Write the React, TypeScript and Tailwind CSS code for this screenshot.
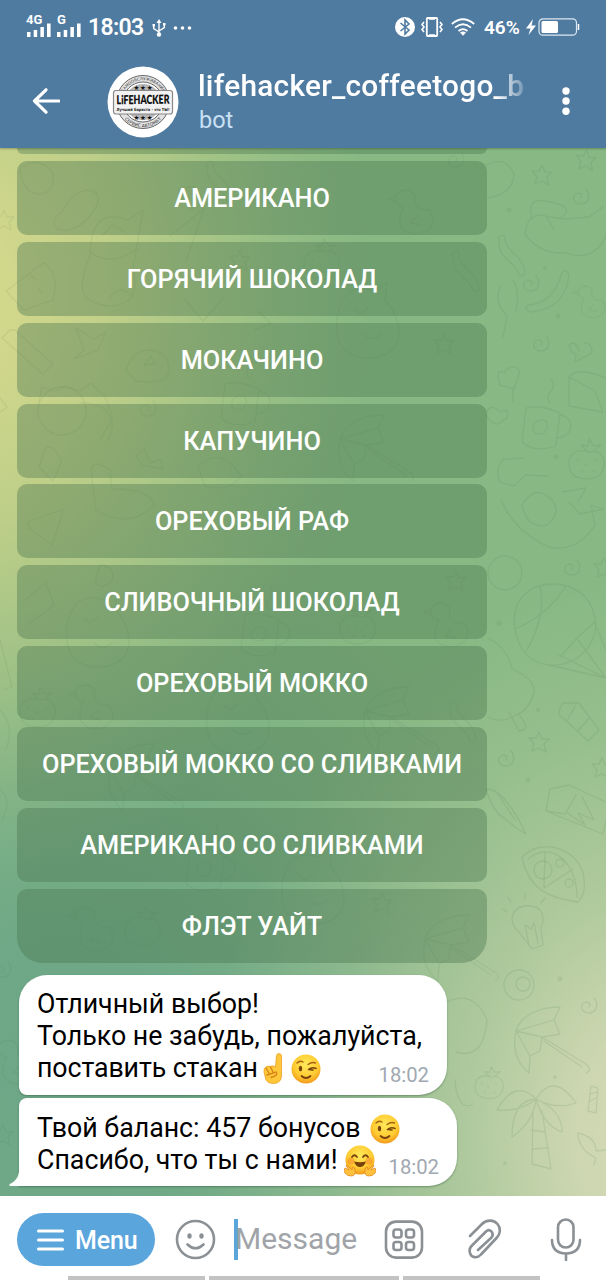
import React from "react";

const drinks = [
  "АМЕРИКАНО",
  "ГОРЯЧИЙ ШОКОЛАД",
  "МОКАЧИНО",
  "КАПУЧИНО",
  "ОРЕХОВЫЙ РАФ",
  "СЛИВОЧНЫЙ ШОКОЛАД",
  "ОРЕХОВЫЙ МОККО",
  "ОРЕХОВЫЙ МОККО СО СЛИВКАМИ",
  "АМЕРИКАНО СО СЛИВКАМИ",
  "ФЛЭТ УАЙТ",
];

function Signal() {
  return (
    <svg width="24" height="14" viewBox="0 0 24 14" className="block" fill="#fff">
      <rect x="0" y="9" width="3.5" height="5" />
      <rect x="6.7" y="7" width="3.5" height="7" />
      <rect x="13.4" y="4" width="3.5" height="10" />
      <rect x="20" y="0.5" width="3.6" height="13.5" />
    </svg>
  );
}

function StatusBar() {
  return (
    <div className="flex h-14 items-center pl-[27px] pr-[26px] text-white">
      <div className="relative mb-[5px] h-[22px] w-[24px] pt-[8px]">
        <span className="absolute -top-[1px] -left-[1px] text-[13px] font-bold leading-[12px]">4G</span>
        <Signal />
      </div>
      <div className="relative mb-[5px] ml-[6px] h-[22px] w-[24px] pt-[8px]">
        <span className="absolute -top-[1px] left-0 text-[13px] font-bold leading-[12px]">G</span>
        <Signal />
      </div>
      <span className="ml-[7px] w-[58px] whitespace-nowrap text-[23px] font-semibold leading-7 tracking-[-0.7px]">18:03</span>
      <svg className="ml-[6px]" width="14" height="18" viewBox="0 0 14 18" fill="none" stroke="#fff" strokeWidth="1.4">
        <path d="M7 3V15M1.7 6.5V9.5L7 13M12.3 5.5V8.5L7 12" />
        <path d="M7 0L9.5 4H4.500ZM0.500 5H3V7.500H0.500ZM11 4H13.500V6.500H11Z" fill="#fff" stroke="none" />
        <circle cx="7" cy="15.500" r="2.200" fill="#fff" stroke="none" />
      </svg>
      <svg className="ml-[7px]" width="20" height="6" fill="#fff">
        <circle cx="2.500" cy="3" r="1.800" /><circle cx="9.500" cy="3" r="1.800" /><circle cx="16.500" cy="3" r="1.800" />
      </svg>
      <div className="flex-1" />
      <svg className="mb-[2px]" width="20" height="20" viewBox="0 0 20 20">
        <circle cx="10" cy="10" r="10" fill="#fff" />
        <path d="M5.500 6L14 13L10 17V3L14 7L5.500 14" fill="none" stroke="#507ba1" strokeWidth="1.600" />
      </svg>
      <svg className="mb-[2px] ml-[6px]" width="22" height="20" viewBox="0 0 22 20" fill="none" stroke="#fff" strokeWidth="1.800">
        <rect x="5.800" y="1" width="10.400" height="18" rx="1" />
        <path d="M8 1.500H14M8 18.500H14" strokeWidth="2.500" />
        <path d="M3 5L1 7.500L3 10L1 12.500L3 15M19 5L21 7.500L19 10L21 12.500L19 15" strokeWidth="1.600" />
      </svg>
      <svg className="mb-[2px] ml-[8px]" width="24" height="18" viewBox="0 0 24 18" fill="none" stroke="#fff" strokeWidth="1.700">
        <path d="M0.800 6Q12 -3.500 23.200 6M4 9.700Q12 2.800 20 9.700M7.500 13Q12 9.200 16.500 13" />
        <path d="M9 14.500Q12 12.500 15 14.500L12 17.700Z" fill="#fff" stroke="none" />
      </svg>
      <span className="ml-[9px] w-[36px] whitespace-nowrap text-[19px] font-semibold leading-6">46%</span>
      <svg className="mb-[2px] ml-[6px]" width="54" height="20" viewBox="0 0 54 20">
        <path d="M7 2L0 11.500H4.500L2.500 18L10 8.500H5.500Z" fill="#fff" />
        <rect x="13" y="1.800" width="37.500" height="16.400" rx="4" fill="none" stroke="#dce8f2" strokeWidth="1.200" />
        <rect x="15.500" y="4" width="16.500" height="12" rx="1.500" fill="#fff" />
        <path d="M52.500 7V13" stroke="#fff" strokeWidth="1.500" />
      </svg>
    </div>
  );
}

function Avatar() {
  return (
    <svg width="72" height="72" viewBox="0 0 72 72" fontFamily="'DejaVu Sans', sans-serif">
      <defs>
        <path id="arcTop" d="M14.200 36A21.800 21.800 0 0 1 57.800 36" />
        <path id="arcBottom" d="M10.800 36A25.200 25.200 0 0 0 61.200 36" />
      </defs>
      <circle cx="36" cy="36" r="35.500" fill="#fff" />
      <circle cx="36" cy="36" r="26.500" fill="#e2e2e2" stroke="#666" strokeWidth="1" />
      <circle cx="36" cy="36" r="20" fill="#fff" stroke="#666" strokeWidth="1" />
      <circle cx="36" cy="36" r="18" fill="#b5b5b5" />
      <text fontSize="4" fill="#333" textAnchor="middle">
        <textPath href="#arcTop" startOffset="50%">САМООБСЛУЖИВАНИЕ</textPath>
      </text>
      <text fontSize="4.400" fill="#333" textAnchor="middle">
        <textPath href="#arcBottom" startOffset="50%">СЕРВИС АВТОМАТ</textPath>
      </text>
      <text x="36" y="24" fontSize="6.500" fill="#111" textAnchor="middle" textLength="19">★★★</text>
      <text x="36" y="54" fontSize="6.500" fill="#111" textAnchor="middle" textLength="19">★★★</text>
      <rect x="6.500" y="24.500" width="59" height="23.500" rx="2.500" fill="#f2f2f2" stroke="#888" strokeWidth="1.200" />
      <text x="36" y="38" fontFamily="Lato, sans-serif" fontSize="12.500" fontWeight="800" fill="#111" textAnchor="middle" textLength="53" lengthAdjust="spacingAndGlyphs" transform="rotate(-.5 36 38)">LiFEHACKER</text>
      <text x="36" y="44.700" fontSize="4.200" fontWeight="700" fill="#222" textAnchor="middle" textLength="53" lengthAdjust="spacingAndGlyphs">Лучший бариста - это ТЫ!</text>
    </svg>
  );
}

function Header() {
  return (
    <header className="relative z-10 h-[148px] bg-[#507ba1] shadow-[0_1px_2px_rgba(0,0,0,0.25)]">
      <StatusBar />
      <div className="flex h-[92px] pl-[32px]">
        <svg className="mt-[32px]" width="28" height="26" viewBox="0 0 28 26" fill="none" stroke="#fff" strokeWidth="3.200" strokeLinecap="round" strokeLinejoin="round">
          <path d="M27 13H2.500M14 1.800L2.500 13L14 24.200" />
        </svg>
        <div className="ml-[47px] mt-[9.500px]"><Avatar /></div>
        <div className="ml-[19px] mt-[12px] w-[328px]">
          <div className="whitespace-nowrap text-[29.800px] font-medium leading-[36px] tracking-[0.270px] text-white [mask-image:linear-gradient(to_right,#000_298px,transparent_334px)]">lifehacker_coffeetogo_b</div>
          <div className="mt-[2px] pl-[1px] text-[23.500px] leading-[28px] text-[#c9e0f5]">bot</div>
        </div>
        <svg className="ml-[35px] mt-[31px]" width="10" height="30" fill="#fff">
          <circle cx="5" cy="4" r="3.700" /><circle cx="5" cy="14" r="3.700" /><circle cx="5" cy="24.300" r="3.700" />
        </svg>
      </div>
    </header>
  );
}

/* Line drawings scattered over the chat wallpaper. */
function Doodles() {
  return (
    <svg className="absolute inset-0" width="606" height="1048" viewBox="0 148 606 1048" fill="none" stroke="#4f8054" strokeOpacity="0.15" strokeWidth="1.300" strokeLinejoin="round" strokeLinecap="round">
      <defs>
        <path id="spiral" d="M1 1Q4 -3 -2 -4Q-9 -2 -5 5Q3 10 8 3Q10 -4 6 -8" />
        <path id="star" d="M0 -10L3 -3L10 -3L5 2L7 10L0 6L-7 9L-5 2L-10 -4L-3 -4Z" />
        <g id="umbrella"><path d="M0 24C5 8 23 0 44 0L38 13L44 27L26 30L24 44L14 49L13 66C0 55 -4 42 0 24ZM0 24L26 30M0 24L38 13M0 24L14 49M26 30L68 56Q78 62 70 66M28 34L66 60" /></g>
        <g id="berry"><path d="M0 5C-15 0 -23 10 -19 23C-15 34 7 35 13 25C19 12 12 2 0 5ZM-2 4L-8 -2L-1 -1L0 -8L5 -1L12 -2L5 4M-12 13L-11 14M-4 17L-3 18M6 13L7 14M-8 24L-7 25M4 24L5 25" /></g>
        <g id="cat"><path d="M0 8C-16 19 -18 55 -5 66C7 78 34 76 44 64C56 47 44 26 35 16L37 -1L23 7C15 4 9 4 0 8ZM4 25L10 30L18 24M14 50Q23 59 32 50" /></g>
        <g id="duck"><path d="M0 0C-14 2 -11 17 -1 17C-9 30 -6 42 9 44C25 44 33 32 24 20C15 21 7 16 10 6Q7 0 0 0ZM-10 7L-17 9L-8 12M12 26L5 33L16 35" /></g>
        <g id="cup"><path d="M0 0L-4 34Q8 45 30 38L34 5Q14 -4 0 0ZM34 7C50 9 48 29 31 30M8 15C18 8 26 14 18 25C10 28 4 23 8 15ZM24 -5Q19 -12 25 -17Q30 -23 25 -29" /></g>
        <path id="hook" d="M0 0C-2 22 16 20 20 36M6 -2C5 13 23 14 26 33M-1 -1Q3 -6 6 -2M20 36Q25 38 26 33" />
      </defs>
      <g>
        <use href="#star" x="542" y="175" /><use href="#star" x="586" y="160" transform="rotate(3 586 160)" />
        <use href="#spiral" x="580" y="197" /><use href="#spiral" x="530" y="284" /><use href="#spiral" x="540" y="344" />
        <use href="#hook" x="499" y="239" /><path d="M528 305Q553 304 562 273Q566 267 569 276Q565 309 531 312Q523 310 528 305ZM501 286Q492 300 507 316L503 337M513 280Q520 290 516 312" />
        <path d="M486 165Q506 155 514 174Q513 194 488 198M525 234Q528 209 549 217L566 219L589 217L603 207M525 234Q540 255 567 253Q593 263 606 236M532 220Q525 195 550 202Q575 207 562 217M546 216L554 230" />
        <use href="#duck" x="585" y="286" transform="translate(585 286) scale(.72) translate(-585 -286)" /><path d="M579 351Q575 339 569 345Q571 354 576 354L575 362L592 353Q592 342 584 343" />
        <path d="M504 373Q494 367 500 385L514 389L520 371Q511 362 504 373ZM513 388V402M486 414Q490 402 500 412Q510 407 507 418L498 424Q490 424 486 414ZM569 377Q577 366 606 378M569 377V406L603 412L595 391Z" />
        <use href="#cup" x="526" y="408" /><use href="#berry" x="589" y="447" />
        <path d="M524 458L504 459Q494 467 500 482L514 486L525 475L548 476M501 500Q515 532 549 547Q577 553 595 525L591 505L604 509L580 514L569 502M522 505Q535 483 552 500Q562 513 547 525Q527 529 522 505M562 492L586 488L578 502" />
        <circle cx="505" cy="573" r="17" /><use href="#spiral" x="571" y="568" /><use href="#star" x="604" y="568" />
        <path d="M515 629C510 600 530 584 552 584C579 584 594 600 596 625C595 645 578 666 551 665Q521 663 515 629ZM515 629Q548 615 566 586M540 586C546 615 532 642 526 651M595 622L586 630L577 638L568 648L560 657M549 665L606 678M595 623L606 650M578 640L606 678M557 654L606 678" />
        <path d="M488 638Q508 648 512 669Q535 679 534 692Q529 711 514 716Q501 724 488 717M509 712L519 731Q528 730 525 724L519 714M563 703Q555 715 564 719L588 741L599 730L579 703ZM575 706L568 719M588 719L578 731M486 789Q504 788 526 834L515 827L505 819Q492 811 486 789ZM498 794L515 820" />
        <path d="M550 789L546 811L603 834L610 804L569 785ZM546 811L565 814L576 795M566 812L585 825L578 813L594 820L582 797M522 857C543 835 583 851 584 880Q586 894 578 902C549 898 529 890 522 857ZM528 859C550 840 577 861 577 897M544 888L545 853M544 888L573 869" />
        <circle cx="543" cy="870" r="9" /><circle cx="560" cy="863" r="4" /><circle cx="569" cy="883" r="4" />
        <use href="#star" x="539" y="742" /><use href="#spiral" x="505" y="759" /><use href="#star" x="602" y="768" />
        <path d="M520 933C508 923 510 909 524 906C542 904 546 916 541 928L543 945L532 949L522 936ZM529 945L525 925L531 929L534 923L538 943M507 912L503 909M511 902L508 897M541 903L545 898M525 899V894" />
        <circle cx="519" cy="985" r="15" /><circle cx="523" cy="984" r="7" /><use href="#spiral" x="588" y="1006" />
        <use href="#umbrella" x="516" y="1007" /><use href="#berry" x="491" y="1073" transform="translate(491 1073) scale(.8) translate(-491 -1073)" />
        <path d="M447 1002Q474 989 487 1020Q484 1060 456 1052M455 1080Q457 1110 472 1105" />
        <path d="M536 1099Q515 1078 497 1110Q521 1112 536 1099ZM536 1099Q554 1071 576 1103Q556 1110 536 1099ZM536 1099Q512 1100 512 1137Q533 1123 536 1099ZM536 1099Q562 1110 562 1132Q544 1126 536 1099M533 1113L532 1164L551 1169L542 1111M531 1130L545 1132M532 1149L549 1148M578 1133Q596 1137 596 1151L606 1150M578 1133Q578 1149 596 1158L594 1165" />
        <path d="M591 1086L598 1088L596 1113L588 1111ZM590 1094L597 1092M590 1101L596 1098" />
      </g>
      <g strokeOpacity="0.11">
        <path d="M20 168Q40 155 53 173C57 201 22 203 20 168ZM63 211C77 180 111 187 93 212Q76 235 57 229Q49 220 63 211Z" />
        <path d="M90 255C76 292 80 302 108 306Q142 307 133 269L143 210L127 220Q91 206 90 255ZM103 235L112 225L125 232M90 252Q112 268 138 248M109 298Q120 284 132 296M6 291L43 263Q60 271 53 300L24 310ZM31 275L35 279M39 289L42 292" />
        <path d="M10 330L2 338L43 374L53 364L15 330Z M76 328L84 350L74 359L98 350L106 332L94 339ZM126 370C137 339 164 351 167 360C177 386 147 382 136 381ZM151 356L155 364L144 365Z" />
        <circle cx="62" cy="411" r="24" /><path d="M39 402L42 387L55 391L66 386L80 391L91 383L105 397Q118 424 108 440M80 403Q108 403 111 421L100 440M45 450Q50 440 62 461L53 481L39 467ZM91 470Q94 458 110 470L112 489Q151 489 154 505Q130 530 96 510ZM28 522L64 509L52 545L29 528Z" />
        <path d="M136 456L144 449L150 463L161 459L163 469L142 465Z" /><use href="#spiral" x="147" y="409" />
        <use href="#cat" x="80" y="593" /><use href="#duck" x="85" y="685" /><use href="#berry" x="40" y="695" /><use href="#umbrella" x="110" y="744" />
        <path d="M0 640L12 687L3 690M25 600L46 583L54 605L29 624M100 565Q114 565 113 580Q101 591 95 582ZM178 190L190 210L205 202L194 186ZM170 236L204 209L186 261M185 300L203 321L224 297M258 310L271 324L254 330M198 467Q219 445 241 475Q232 493 205 486Z" />
        <use href="#hook" x="207" y="165" /><use href="#cup" x="225" y="384" /><use href="#star" x="240" y="260" /><use href="#berry" x="324" y="247" /><use href="#cat" x="350" y="284" /><use href="#duck" x="405" y="190" />
        <use href="#umbrella" x="340" y="415" /><use href="#hook" x="453" y="255" /><use href="#spiral" x="455" y="160" /><use href="#star" x="444" y="344" />
        <use href="#cup" x="245" y="615" /><use href="#berry" x="360" y="612" /><use href="#star" x="456" y="581" /><use href="#duck" x="440" y="603" /><use href="#cat" x="220" y="680" /><use href="#umbrella" x="365" y="687" /><use href="#hook" x="450" y="705" />
        <use href="#duck" x="85" y="907" /><use href="#berry" x="145" y="914" /><use href="#cup" x="190" y="850" /><use href="#cat" x="295" y="850" /><use href="#star" x="382" y="903" /><use href="#umbrella" x="425" y="915" />
        <use href="#spiral" x="2" y="970" /><use href="#duck" x="8" y="1040" /><use href="#star" x="3" y="1135" /><use href="#star" x="4" y="220" /><path d="M0 398L7 407L0 412M0 710Q15 725 6 750M0 790Q13 800 2 820" />
      </g>
      <g fill="#4f8054" fillOpacity="0.12" stroke="none">
        <circle cx="509" cy="210" r="2.500" /><circle cx="545" cy="268" r="2" /><circle cx="558" cy="316" r="2.500" /><circle cx="556" cy="457" r="2.500" /><circle cx="499" cy="623" r="2.500" /><circle cx="538" cy="710" r="2" /><circle cx="528" cy="780" r="2.500" /><circle cx="560" cy="979" r="2.500" /><circle cx="555" cy="1077" r="2" /><circle cx="505" cy="1163" r="2" />
      </g>
    </svg>
  );
}

function FaceGradient({ id }: { id: string }) {
  return (
    <radialGradient id={id} cx="50%" cy="35%" r="65%">
      <stop offset="0" stopColor="#ffe95a" /><stop offset="0.65" stopColor="#ffcb32" /><stop offset="1" stopColor="#f29a1c" />
    </radialGradient>
  );
}

function Wink() {
  return (
    <svg className="inline-block" width="30" height="30" viewBox="0 0 30 30">
      <defs><FaceGradient id="wink" /></defs>
      <circle cx="15" cy="15" r="14.500" fill="url(#wink)" />
      <ellipse cx="9.500" cy="14.500" rx="1.700" ry="2.700" fill="#78420d" />
      <path d="M6 9Q9 6 12 8M17 10.500Q21 7.500 24.500 9" fill="none" stroke="#a8620f" strokeWidth="1.400" strokeLinecap="round" />
      <path d="M17.500 15.500Q21 12.500 25 14.500M18 15.500L22 16" fill="none" stroke="#78420d" strokeWidth="1.600" strokeLinecap="round" />
      <path d="M10.500 22Q15 26 19.500 22" fill="none" stroke="#78420d" strokeWidth="1.700" strokeLinecap="round" />
    </svg>
  );
}

function Hug() {
  return (
    <svg className="inline-block" width="32" height="32" viewBox="0 0 32 32">
      <defs><FaceGradient id="hug" /></defs>
      <circle cx="16" cy="15" r="14.500" fill="url(#hug)" />
      <circle cx="7" cy="16" r="3.500" fill="#f58a2c" opacity=".55" /><circle cx="25" cy="16" r="3.500" fill="#f58a2c" opacity=".55" />
      <path d="M8 12Q10.500 8.500 13 12M19 12Q21.500 8.500 24 12" fill="none" stroke="#78420d" strokeWidth="1.800" strokeLinecap="round" />
      <path d="M10 16.500Q16 18 22 16.500Q20 22 16 22Q12 22 10 16.500Z" fill="#78420d" />
      <path d="M1 23L5 25L2 20.500Q3 19.500 5 22L8 25L8.500 22Q11 22 11 25Q12 31 7 31Q3 31 1 28L0 26ZM31 23L27 25L30 20.500Q29 19.500 27 22L24 25L23.500 22Q21 22 21 25Q20 31 25 31Q29 31 31 28L32 26Z" fill="#ffc23e" stroke="#e58a20" strokeWidth=".8" />
    </svg>
  );
}

function PointUp() {
  return (
    <svg className="inline-block" width="21" height="31" viewBox="0 0 21 31">
      <path d="M12.500 14L13.500 2.500Q14 .5 16 .5Q18.500 .7 18.500 3V22Q18.500 30.500 10.500 30.500Q5 30.500 3 27L1 19Q.5 15 3 14Q5 12.500 7 13.500Q10 12 12.500 14Z" fill="#ffc83a" stroke="#ec9e20" strokeWidth=".8" />
      <path d="M3 15L6 20M7.500 14L10 19M4 22L13 19Q15 21 12 23L8 24.500" fill="none" stroke="#d88617" strokeWidth="1.400" strokeLinecap="round" />
    </svg>
  );
}

function InputBar() {
  return (
    <footer className="flex h-[84px] flex-col bg-white">
      <div className="flex h-[80px] items-start pl-[17px] pt-[17px]">
        <div className="flex h-[53px] w-[138px] items-center rounded-full bg-[#5ba5dd] pl-[20px] text-white">
          <svg width="27" height="22" stroke="#fff" strokeWidth="3" strokeLinecap="round">
            <path d="M1.500 2H25.500M1.500 11H25.500M1.500 20H25.500" />
          </svg>
          <span className="ml-[11px] mt-[2px] text-[25px] font-medium tracking-[-0.100px]">Menu</span>
        </div>
        <svg className="ml-[20px] mt-[6px]" width="41" height="41" viewBox="0 0 41 41" fill="none" stroke="#8b9095" strokeWidth="2.600" strokeLinecap="round">
          <circle cx="20.500" cy="20.500" r="18.500" /><path d="M12.500 25.500Q20.500 33 28.500 25.500" />
          <ellipse cx="14.500" cy="17" rx="2.200" ry="2.700" fill="#8b9095" stroke="none" /><ellipse cx="26.500" cy="17" rx="2.200" ry="2.700" fill="#8b9095" stroke="none" />
        </svg>
        <div className="ml-[18px] mt-[6px] h-[41px] w-[4px] bg-[#5ba5dd]" />
        <div className="-ml-[3px] mt-[7px] w-[149px] whitespace-nowrap text-[30px] leading-[38px] text-[#a0a4a9]">Message</div>
        <svg className="mt-[7px]" width="40" height="40" viewBox="0 0 40 40" fill="none" stroke="#8b9095" strokeWidth="2.600">
          <rect x="2" y="1.600" width="36" height="36" rx="10" />
          <rect x="9.500" y="9.500" width="8" height="8" rx="2.500" /><rect x="22" y="9.500" width="8" height="8" rx="2.500" /><rect x="9.500" y="22" width="8" height="8" rx="2.500" /><rect x="22" y="22" width="8" height="8" rx="2.500" />
        </svg>
        <svg className="ml-[43px] mt-[6px]" width="36" height="42" viewBox="0 0 36 42" fill="none" stroke="#8b9095" strokeWidth="2.600" strokeLinecap="round" strokeLinejoin="round">
          <path d="M3 17L15 5C20 0 27 1 30.500 5C34 9 33.500 14.500 30 18.500L14 35.500C10 40 4 38.500 3 34C2 31 3 28.500 5 26.500L19 12.500C21 10.500 23 11 24.500 12.500C26 14.500 26 17 24 19L11 31" />
        </svg>
        <svg className="ml-[46px] mt-[5px]" width="34" height="43" viewBox="0 0 34 43" fill="none" stroke="#8b9095" strokeWidth="2.600" strokeLinecap="round">
          <rect x="9" y="1.500" width="15.500" height="28" rx="7.700" /><path d="M3 22Q3 35 17 35.500Q31 35 31 22M17 35.500V42" />
        </svg>
      </div>
      <div className="flex h-[4px] gap-[4px] pl-[68px]">
        <div className="w-[137px] bg-[#c3c3c3]" /><div className="w-[190px] bg-[#c3c3c3]" /><div className="w-[137px] bg-[#c3c3c3]" />
      </div>
    </footer>
  );
}

export default function App() {
  return (
    <div className="flex h-[1280px] w-[606px] flex-col overflow-hidden font-['Roboto','Liberation_Sans',sans-serif]">
      <Header />
      <main className="relative h-[1048px] overflow-hidden bg-[#88b984]">
        <div className="absolute inset-0 bg-[radial-gradient(ellipse_400px_590px_at_-30px_150px,#d3d88c_0%,rgba(211,216,140,0.97)_12%,rgba(208,214,138,0.78)_35%,rgba(208,214,138,0.4)_62%,rgba(208,214,138,0.12)_84%,rgba(208,214,138,0)_100%),radial-gradient(ellipse_480px_560px_at_680px_990px,#dbddbb_0%,rgba(216,219,183,0.86)_22%,rgba(208,216,176,0.55)_46%,rgba(208,216,176,0.2)_74%,rgba(208,216,176,0)_100%),radial-gradient(ellipse_520px_560px_at_60px_930px,#6da787_0%,rgba(109,167,135,0.95)_22%,rgba(109,167,135,0.65)_45%,rgba(109,167,135,0.22)_75%,rgba(109,167,135,0)_100%)]" />
        <Doodles />
        <div className="relative flex h-full flex-col items-start">
          <div className="ml-[17px] h-[6px] w-[470px] rounded-b-[10px] bg-[#4a764f]/38" />
          <div className="ml-[17px] mt-[7px] flex w-[470px] flex-col gap-[6.850px]">
            {drinks.map((name) => (
              <button key={name} className="flex h-[74px] shrink-0 items-center justify-center whitespace-nowrap rounded-[10px] bg-[#4a764f]/40 pt-[2px] text-[25.300px] font-medium leading-8 text-white last:rounded-b-[26px]">
                {name}
              </button>
            ))}
          </div>
          <div className="ml-[19px] mt-[12px] h-[120px] w-[428px] rounded-[28px] rounded-bl-[8px] bg-white pl-[18px] pt-[13px] text-[26.750px] leading-[32px] text-black shadow-[0_1px_2px_rgba(40,80,50,0.45)]">
            <div>Отличный выбор!</div>
            <div className="whitespace-nowrap">Только не забудь, пожалуйста,</div>
            <div className="flex h-8 whitespace-nowrap">
              <span className="tracking-[-0.100px]">поставить стакан</span>
              <span className="ml-[5px] -mt-[1px]"><PointUp /></span>
              <span className="ml-[7px] -mt-[1px]"><Wink /></span>
              <span className="ml-auto mr-[18px] mt-[7px] text-[20.300px] text-[#a0a8b1]">18:02</span>
            </div>
          </div>
          <div className="relative ml-[19px] mt-[3px] h-[88px] w-[438px] rounded-[28px] rounded-bl-none rounded-tl-[8px] bg-white pl-[18px] pt-[14px] text-[26.750px] leading-[32px] text-black shadow-[0_1px_2px_rgba(40,80,50,0.45)]">
            <svg className="absolute -left-[10px] bottom-0" width="11" height="20"><path d="M10 0V6Q9 14 1 18Q-1 20 2 20H11V0Z" fill="#fff" /></svg>
            <div className="flex h-8 whitespace-nowrap"><span>Твой баланс: 457 бонусов</span><span className="ml-[9px] -mt-[1px]"><Wink /></span></div>
            <div className="flex h-8 whitespace-nowrap"><span>Спасибо, что ты с нами!</span><span className="ml-[6px] -mt-[1px]"><Hug /></span>
              <span className="ml-auto mr-[18px] mt-[7px] text-[20.300px] text-[#a0a8b1]">18:02</span></div>
          </div>
        </div>
      </main>
      <InputBar />
    </div>
  );
}
